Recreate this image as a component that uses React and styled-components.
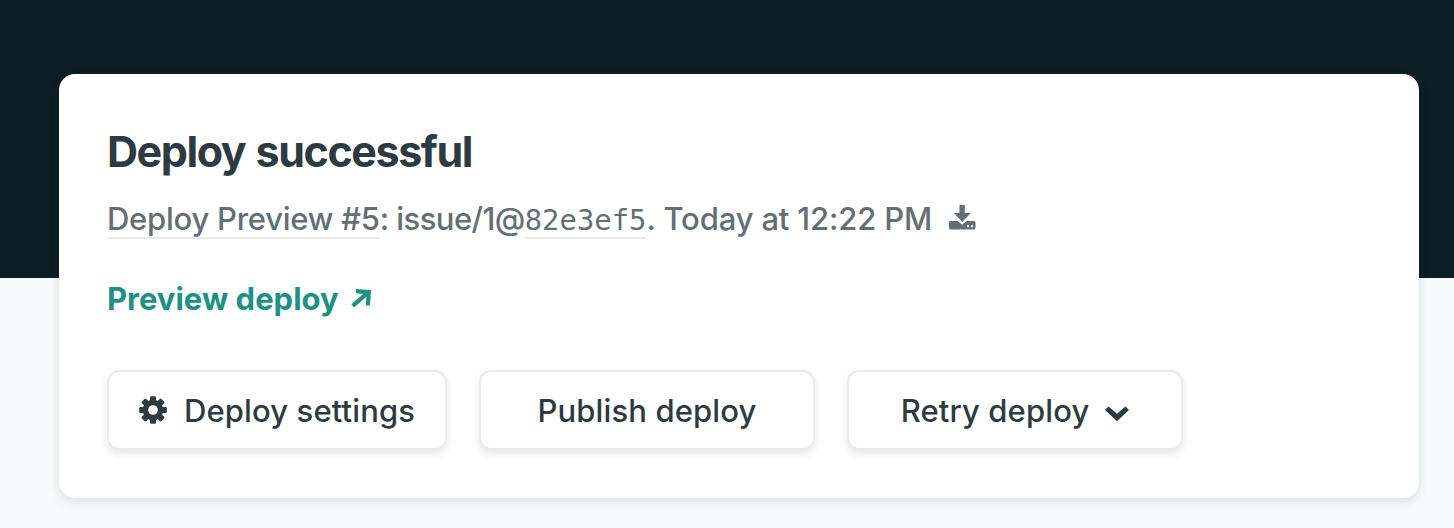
import React from "react";
import styled, { createGlobalStyle } from "styled-components";

const GlobalStyle = createGlobalStyle`
  * { box-sizing: border-box; }
  body { margin: 0; background: #f7fbfc; }
  svg { display: block; flex: none; }
`;

const Page = styled.div`
  height: 528px;
  padding: 74px 35px 30px 59px;
  overflow: hidden;
  background: linear-gradient(#0e1e25 278px, #f7fbfc 278px);
  font-family: Inter, "Liberation Sans", sans-serif;
  color: #2d3b41;
`;

const Card = styled.section`
  height: 424px;
  padding: 48px;
  border-radius: 16px;
  background: #fff;
  box-shadow: 0 4px 12px rgba(14, 30, 37, 0.12);
`;

const Title = styled.h1`
  margin: 0;
  height: 60px;
  line-height: 58px;
  font-size: 43px;
  font-weight: 700;
  letter-spacing: -1.43px;
  word-spacing: 1.5px;
  white-space: nowrap;
`;

const Meta = styled.div`
  display: flex;
  align-items: center;
  height: 48px;
  margin-top: 14px;
  line-height: 36px;
  font-size: 31px;
  font-weight: 500;
  letter-spacing: -0.25px;
  color: #646e73;
  white-space: pre;

  svg { margin: -5px 0 0 17px; }
`;

const MetaText = styled.span`
  height: 38px;
  letter-spacing: ${(p) => p.$tracking || -0.16}px;
`;

const MetaLink = styled.a`
  height: 38px;
  border-bottom: 2px solid #e9ebeb;
`;

const Hash = styled(MetaLink)`
  font-family: "DejaVu Sans Mono", monospace;
  font-size: 28.8px;
  font-weight: 400;
  line-height: 38px;
  letter-spacing: 0.05px;
`;

const PreviewLink = styled.a`
  display: flex;
  align-items: center;
  height: 48px;
  margin-top: 30px;
  font-size: 31px;
  font-weight: 700;
  letter-spacing: 0;
  color: #1e9184;

  svg { margin-left: 12px; }
`;

const Actions = styled.div`
  display: flex;
  gap: 32px;
  margin-top: 48px;
`;

const Button = styled.button`
  display: flex;
  align-items: center;
  justify-content: center;
  gap: ${(p) => p.$gap || 0}px;
  width: ${(p) => p.$width}px;
  height: 80px;
  padding: 0;
  border: 2px solid #e9ebeb;
  border-radius: 12px;
  background: #fff;
  box-shadow: 0 4px 8px rgba(14, 30, 37, 0.1);
  font: 500 31px Inter, "Liberation Sans", sans-serif;
  letter-spacing: 0.12px;
  color: #2d3b41;
  white-space: nowrap;
`;

const DownloadIcon = () => (
  <svg width="27" height="25" viewBox="0 0 27 25" fill="currentColor">
    <path d="M10.5 0h5.3v8h6L13.2 17 4.8 8h5.7z" />
    <path
      fillRule="evenodd"
      d="M1.5 16h7.2l4.5 3.8 4.5-3.8h7.2q1.6 0 1.6 1.6v5.2q0 1.7-1.6 1.7H1.6Q0 24.5 0 22.8v-5.2Q0 16 1.5 16zM18 20.2v2h2v-2zM22 20.2v2h2v-2z"
    />
  </svg>
);

const ExternalIcon = () => (
  <svg width="21" height="20" viewBox="0 0 21 20" fill="currentColor">
    <path d="M5 1 20 2 19 17.5h-4.2l.6-8.8L3 19.5.3 16.3 12.2 5.9 5 5.2z" />
  </svg>
);

const GearIcon = () => (
  <svg width="28" height="28" viewBox="-14 -14 28 28" fill="currentColor">
    <mask id="gear-hole" maskUnits="userSpaceOnUse" x="-14" y="-14" width="28" height="28">
      <rect x="-14" y="-14" width="28" height="28" fill="#fff" />
      <circle r="4.8" fill="#000" />
    </mask>
    <g mask="url(#gear-hole)">
      {[0, 45, 90, 135].map((angle) => (
        <rect key={angle} x="-3" y="-13.8" width="6" height="27.6" rx="1.2" transform={`rotate(${angle})`} />
      ))}
      <circle r="10.3" />
    </g>
  </svg>
);

const ChevronIcon = styled.svg`
  margin-top: 7px;
`;

export default function App() {
  return (
    <>
      <GlobalStyle />
      <Page>
        <Card>
          <Title>Deploy successful</Title>
          <Meta>
            <MetaLink>Deploy Preview #5</MetaLink>
            <MetaText $tracking={-0.55}>: issue/1@</MetaText>
            <Hash>82e3ef5</Hash>
            <MetaText>. Today at 12:22 PM</MetaText>
            <DownloadIcon />
          </Meta>
          <PreviewLink>
            Preview deploy
            <ExternalIcon />
          </PreviewLink>
          <Actions>
            <Button $width={340} $gap={17}>
              <GearIcon />
              Deploy settings
            </Button>
            <Button $width={336}>Publish deploy</Button>
            <Button $width={336} $gap={16}>
              Retry deploy
              <ChevronIcon width="24" height="16" viewBox="0 0 24 16" fill="currentColor">
                <path d="M0 4 3.6.5 12 7.8 20.4.5 24 4 12 15.3z" />
              </ChevronIcon>
            </Button>
          </Actions>
        </Card>
      </Page>
    </>
  );
}
